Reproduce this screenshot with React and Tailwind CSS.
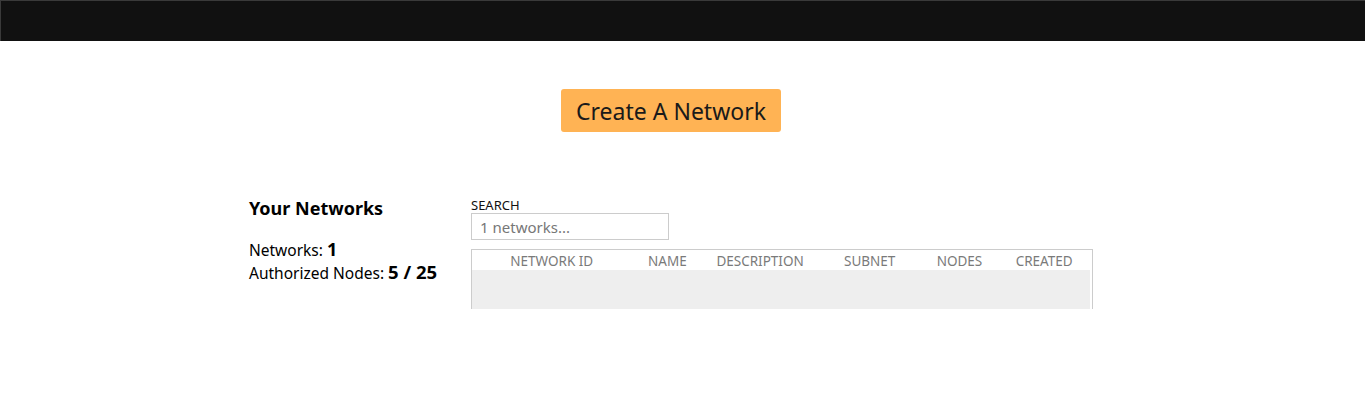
export default function App() {
  const font = { fontFamily: '"Segoe UI", "Noto Sans", "Open Sans", sans-serif' };
  const cols = [
    ["NETWORK ID", "w-[160px]"],
    ["NAME", "w-[72px]"],
    ["DESCRIPTION", "w-[114px]"],
    ["SUBNET", "w-[106px]"],
    ["NODES", "w-[74px]"],
    ["CREATED", "w-[96px]"],
  ];
  return (
    <div className="min-h-[413px] bg-white text-black" style={font}>
      <div className="h-[41px] bg-[#111111] border-t border-l border-[#3a3a3a]" />
      <div className="w-[867px] mx-auto">
        <div className="w-[844px]">
          <div className="flex justify-center pt-[48px]">
            <button className="h-[43px] w-[220px] rounded-[3px] bg-[#ffb354] pt-[2px] text-[23px] text-[#1a1a1a] leading-none" style={font}>
              Create A Network
            </button>
          </div>
          <div className="flex mt-[63px]">
            <div className="w-[222px] pt-[1px]">
              <div className="text-[18px] font-bold leading-[24px]">Your Networks</div>
              <div className="mt-[18px] text-[15.5px] leading-[22px]">
                Networks: <span className="text-[18px] font-bold">1</span>
              </div>
              <div className="text-[15.5px] leading-[22px]">
                Authorized Nodes: <span className="text-[18.5px] font-bold">5 / 25</span>
              </div>
            </div>
            <div className="w-[622px] pt-[2px]">
              <div className="text-[13px] leading-[16px] text-[#111]">SEARCH</div>
              <input
                className="mt-0 block h-[27px] w-[198px] border border-[#cccccc] px-[8px] text-[15px] text-[#444] placeholder-[#777] outline-none"
                placeholder="1 networks..."
                style={font}
              />
              <div className="mt-[9px] w-[622px] border-t border-l border-r border-[#cccccc]">
                <div className="flex h-[20px] pt-[2px] items-center text-[13.5px] text-[#7a7a7a]">
                  {cols.map(([c, w]) => (
                    <div key={c} className={`${w} text-center`}>{c}</div>
                  ))}
                </div>
                <div className="h-[39px] w-[618px] bg-[#eeeeee]" />
              </div>
            </div>
          </div>
        </div>
      </div>
    </div>
  );
}
